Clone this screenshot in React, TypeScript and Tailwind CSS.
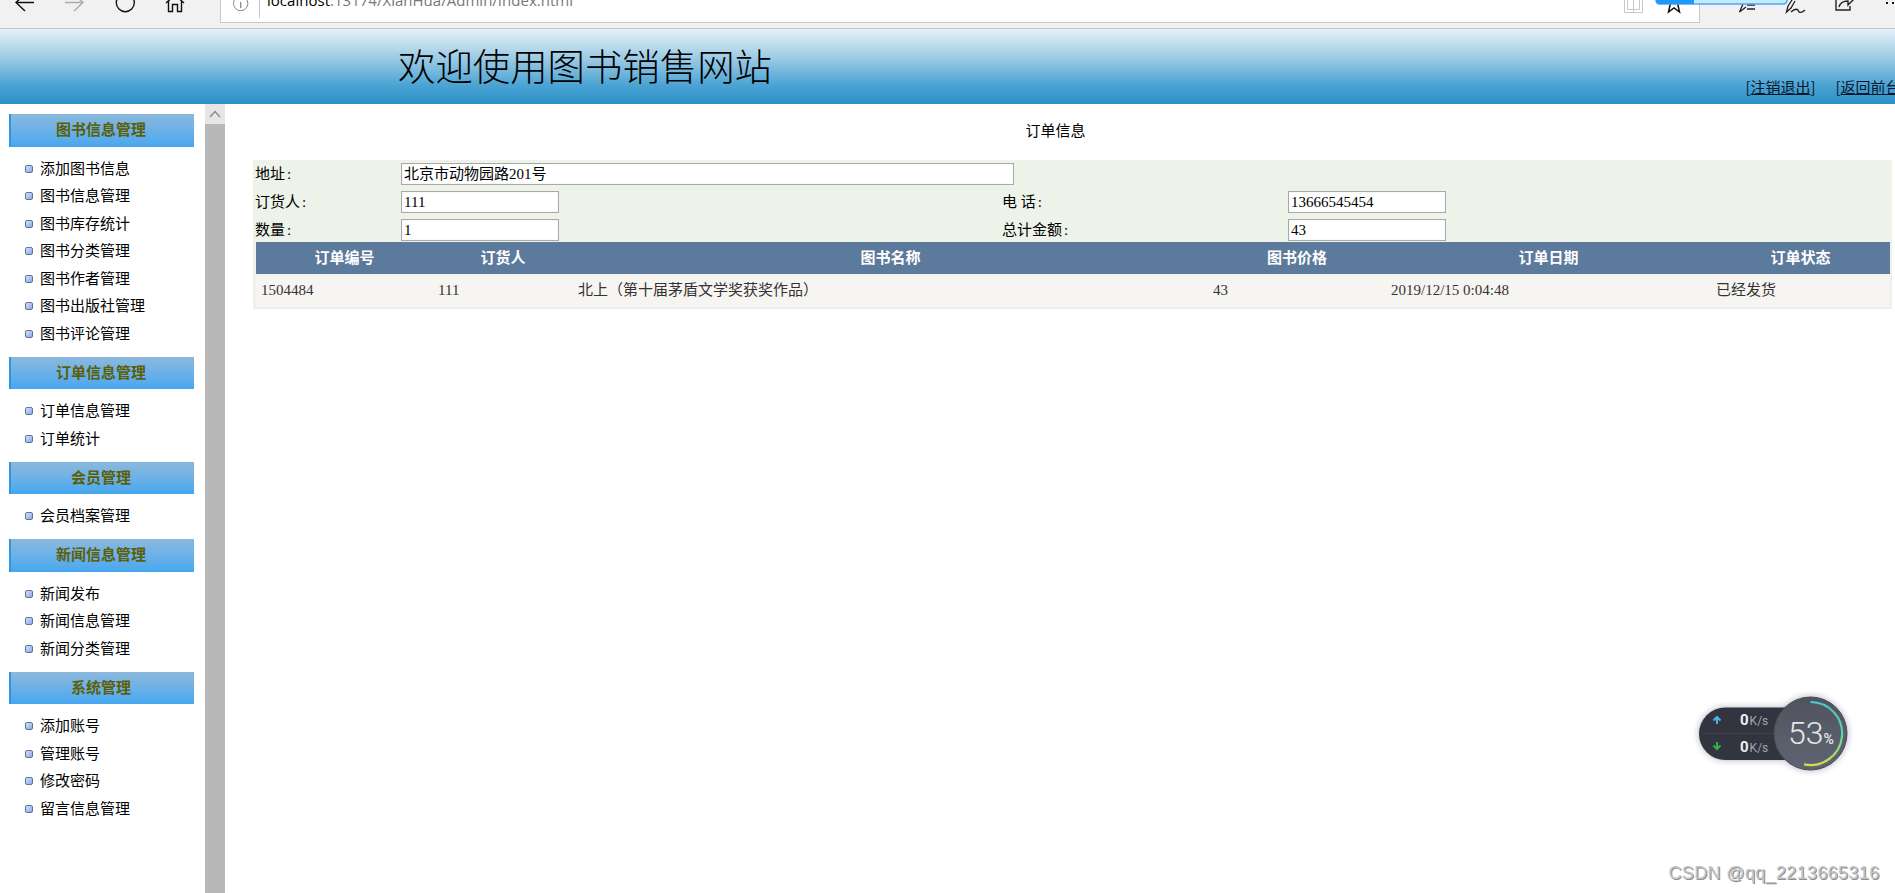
import React from "react";

const sections = [
  { title: "图书信息管理", items: ["添加图书信息", "图书信息管理", "图书库存统计", "图书分类管理", "图书作者管理", "图书出版社管理", "图书评论管理"] },
  { title: "订单信息管理", items: ["订单信息管理", "订单统计"] },
  { title: "会员管理", items: ["会员档案管理"] },
  { title: "新闻信息管理", items: ["新闻发布", "新闻信息管理", "新闻分类管理"] },
  { title: "系统管理", items: ["添加账号", "管理账号", "修改密码", "留言信息管理"] },
];

function BrowserBar() {
  return (
    <div className="relative h-[29px] shrink-0 overflow-hidden border-b border-[#c3c6c8] bg-[#f1f1f1]">
      <div className="ml-[220px] flex h-[23px] w-[1480px] border-b border-l border-r border-[#c8c8c8] bg-white">
        <div className="h-[18px] w-[39px] border-r border-[#c8c8c8]" />
        <div className="-mt-[10px] ml-[7px] h-5 whitespace-nowrap text-[15px] leading-5 tracking-[0.020px] text-[#777] [font-family:'Open_Sans','Noto_Sans',sans-serif]">
          <span className="text-black">localhost</span>:13174/XianHua/Admin/Index.html
        </div>
      </div>
      <svg className="absolute left-0 top-0" width="1895" height="28" fill="none">
        <g stroke="#111" strokeWidth="1.4">
          <path d="M34 2.500H16M25 11 16 2.500 25 -6" />
          <path d="M65 2.500H83M74 11 83 2.500 74 -6" stroke="#aaa" />
          <circle cx="125.300" cy="2.700" r="9" />
          <path d="M166 3 175 -5 184 3M168.500 1V11.500H172.500V4.500H177.500V11.500H181.500V1" />
        </g>
        <circle cx="240.700" cy="3.500" r="7.200" stroke="#888" />
        <path d="M240.700 2V8" stroke="#888" strokeWidth="1.300" />
        <path d="M1624.500 -3V12.500H1642.500V-3M1627.500 -3V9.500H1639.500V-3M1633.500 -3V12" stroke="#c8c8c8" />
        <path d="M1670.500 3 1668.500 12 1674 8 1679.500 12 1677.500 3" stroke="#111" strokeWidth="1.500" />
        <path d="M1743 4 1739.500 12 1746 7M1747 5H1755M1747 9H1755" stroke="#222" strokeWidth="1.300" />
        <path d="M1792 0 1788 6 1786.500 12 1791 8 1795 1M1791 12C1795 8 1798 9 1798.500 11S1802 13 1805 10" stroke="#222" strokeWidth="1.300" />
        <path d="M1836 0V10H1850V6M1839 7C1840 3 1844 1 1848 1V5L1854 -1" stroke="#222" strokeWidth="1.400" />
        <path d="M1886 3H1888M1892 3H1894" stroke="#111" strokeWidth="2" />
        <path d="M1656 -4V0Q1656 4 1660 4H1783Q1787 4 1787 0V-4Z" fill="#c5e9ff" stroke="#45a6f5" strokeWidth="1.500" />
        <path d="M1656 -4V0Q1656 4 1660 4H1694V-4Z" fill="#2199fb" />
      </svg>
    </div>
  );
}

function Banner() {
  return (
    <header className="flex h-[75px] shrink-0 justify-between overflow-hidden bg-[linear-gradient(to_bottom,#e4f1f8_0%,#b3d7ea_27%,#84bfdf_50%,#4ba3d3_75%,#2c90c8_100%)]">
      <h1 className="ml-[398px] mt-[9px] whitespace-nowrap text-[37.400px] font-[300] leading-[54px] text-black">欢迎使用图书销售网站</h1>
      <div className="mt-[48px] flex w-[152px] shrink-0 whitespace-nowrap text-[15px] leading-[20px] text-[#08182c]">
        <span className="w-[90px] shrink-0"><i className="inline-block w-[7.500px] text-right not-italic">[</i><a className="underline">注销退出</a>]</span>
        <span><i className="inline-block w-[7.500px] text-right not-italic">[</i><a className="underline">返回前台</a>]</span>
      </div>
    </header>
  );
}

function Sidebar() {
  return (
    <nav className="w-[205px] shrink-0 pl-[9px] pt-[10px] text-[15px] text-black">
      {sections.map((s) => (
        <section key={s.title} className="mb-[9.250px]">
          <h2 className="mb-[8.250px] flex h-[32.500px] w-[185px] items-center justify-center border-l-2 border-[#2f97e0] bg-linear-to-b from-[#8bb9dd] to-[#45a7f0] pb-[2px] pr-[3px] font-bold text-[#5c5f08]">
            {s.title}
          </h2>
          <ul>
            {s.items.map((t) => (
              <li key={t} className="flex h-[27.500px] items-center pl-4">
                <span className="mr-[7px] size-2 rounded-[2px] border border-[#65728c] bg-linear-to-br from-[#d5e4fb] to-[#86a8ea]" />
                <span className="pb-px">{t}</span>
              </li>
            ))}
          </ul>
        </section>
      ))}
    </nav>
  );
}

function Label({ children }: { children: string }) {
  return (
    <span>
      {children}
      <span className="ml-[2px]">:</span>
    </span>
  );
}

function Field({ value, className = "w-[158px]" }: { value: string; className?: string }) {
  return (
    <input
      readOnly
      value={value}
      className={`${className} h-[22px] border border-[#a9a9a9] bg-white px-[2px] text-[15px] text-black shadow-[inset_0_0_1px_#ccc] outline-none [font-family:'Liberation_Serif','Noto_Sans_CJK_SC',serif]`}
    />
  );
}

function Orders() {
  return (
    <main className="w-[1639px] shrink-0 text-[15px] text-black [font-family:'Liberation_Serif','Noto_Sans_CJK_SC',serif]">
      <h2 className="h-[56px] pr-[34px] text-center leading-[55px]">订单信息</h2>
      <div className="h-[149px] border-b-2 border-[#efefeb] bg-[#edf3e9]">
        <div className="grid h-[82px] grid-cols-[146px_601px_286px_1fr] grid-rows-[24px_28px_28px] items-end pl-[2px] pt-px leading-[22px]">
          <Label>地址</Label>
          <Field value="北京市动物园路201号" className="w-[613px]" />
          <span />
          <span />
          <Label>订货人</Label>
          <Field value="111" />
          <Label>电 话</Label>
          <Field value="13666545454" />
          <Label>数量</Label>
          <Field value="1" />
          <Label>总计金额</Label>
          <Field value="43" />
        </div>
        <table className="ml-[3px] w-[1634px] table-fixed border-collapse">
          <colgroup>
            <col className="w-[177px]" />
            <col className="w-[140px]" />
            <col className="w-[635px]" />
            <col className="w-[178px]" />
            <col className="w-[325px]" />
            <col className="w-[179px]" />
          </colgroup>
          <thead>
            <tr className="h-8 bg-[#5c7a9c] text-white">
              {["订单编号", "订货人", "图书名称", "图书价格", "订单日期", "订单状态"].map((h) => (
                <th key={h} className="p-0 font-bold leading-5">{h}</th>
              ))}
            </tr>
          </thead>
          <tbody>
            <tr className="h-[33px] bg-[#f7f5f2] text-[#333]">
              {["1504484", "111", "北上（第十届茅盾文学奖获奖作品）", "43", "2019/12/15 0:04:48", "已经发货"].map((c) => (
                <td key={c} className="px-[5px] pb-[2px] pt-0 leading-5">{c}</td>
              ))}
            </tr>
          </tbody>
        </table>
      </div>
    </main>
  );
}

function SpeedWidget() {
  return (
    <div className="absolute left-[1690px] top-[688px] h-[92px] w-[168px] [font-family:Roboto,sans-serif]">
      <svg className="absolute inset-0" width="168" height="92" fill="none">
        <defs>
          <linearGradient id="ring" x1="0" y1="0" x2="0" y2="1">
            <stop stopColor="#4bcbd2" />
            <stop offset="0.5" stopColor="#5fcfa8" />
            <stop offset="1" stopColor="#d3df4c" />
          </linearGradient>
          <linearGradient id="disc" x1="0" y1="0" x2="0" y2="1">
            <stop stopColor="#50545f" />
            <stop offset="1" stopColor="#5f6471" />
          </linearGradient>
          <filter id="glow" x="-20%" y="-20%" width="140%" height="140%">
            <feDropShadow dx="0" dy="0" stdDeviation="3" floodColor="#33334d" floodOpacity="0.4" />
          </filter>
        </defs>
        <g filter="url(#glow)">
          <rect x="9" y="19.500" width="120" height="52.500" rx="26.250" fill="#323641" />
          <circle cx="120.500" cy="45.500" r="36.500" fill="url(#disc)" stroke="#484c58" />
        </g>
        <path d="M12 45.500H84" stroke="#3e424d" />
        <path d="M120.500 14A31.500 31.500 0 1 1 114 76.300" stroke="url(#ring)" strokeWidth="2.200" />
        <path d="M27 36V29M23.500 32.500 27 29 30.500 32.500" stroke="#4fb0ea" strokeWidth="2" />
        <path d="M27 54V61M23.500 57.500 27 61 30.500 57.500" stroke="#2cb548" strokeWidth="2" />
      </svg>
      <div className="relative flex h-full pl-[50px] pt-[19px] text-white">
        <div className="w-[48px] text-[12px] leading-[27px] text-[#a0a4ad]">
          <p className="h-[27px]"><b className="mr-px text-[15px] text-[#eee]">0</b>K/s</p>
          <p className="h-[27px]"><b className="mr-px text-[15px] text-[#eee]">0</b>K/s</p>
        </div>
        <p className="whitespace-nowrap pt-[9px] text-[32px] font-light leading-[34px] text-[#e6e7ea]">53<span className="text-[14px] font-medium">%</span></p>
      </div>
    </div>
  );
}

export default function App() {
  return (
    <div className="relative flex h-[893px] w-[1895px] flex-col overflow-hidden bg-white [font-family:'Noto_Sans_CJK_SC',sans-serif]">
      <BrowserBar />
      <Banner />
      <div className="flex min-h-0 flex-1">
        <Sidebar />
        <div className="w-5 shrink-0 bg-[#b8b8b8]">
          <div className="flex h-5 items-center justify-center bg-[#e6e6e6]">
            <svg width="12" height="8" fill="none" stroke="#8a8a8a" strokeWidth="1.400"><path d="M1 7 6 1.500 11 7" /></svg>
          </div>
        </div>
        <div className="ml-7"><Orders /></div>
      </div>
      <SpeedWidget />
      <p className="absolute left-[1668.500px] top-[861px] whitespace-nowrap text-[18px] leading-6 tracking-[0.350px] text-[#c4c4c4] [font-family:'Liberation_Sans',sans-serif] [text-shadow:1px_1px_0_#8c8c8c]">
        CSDN @qq_2213665316
      </p>
    </div>
  );
}
